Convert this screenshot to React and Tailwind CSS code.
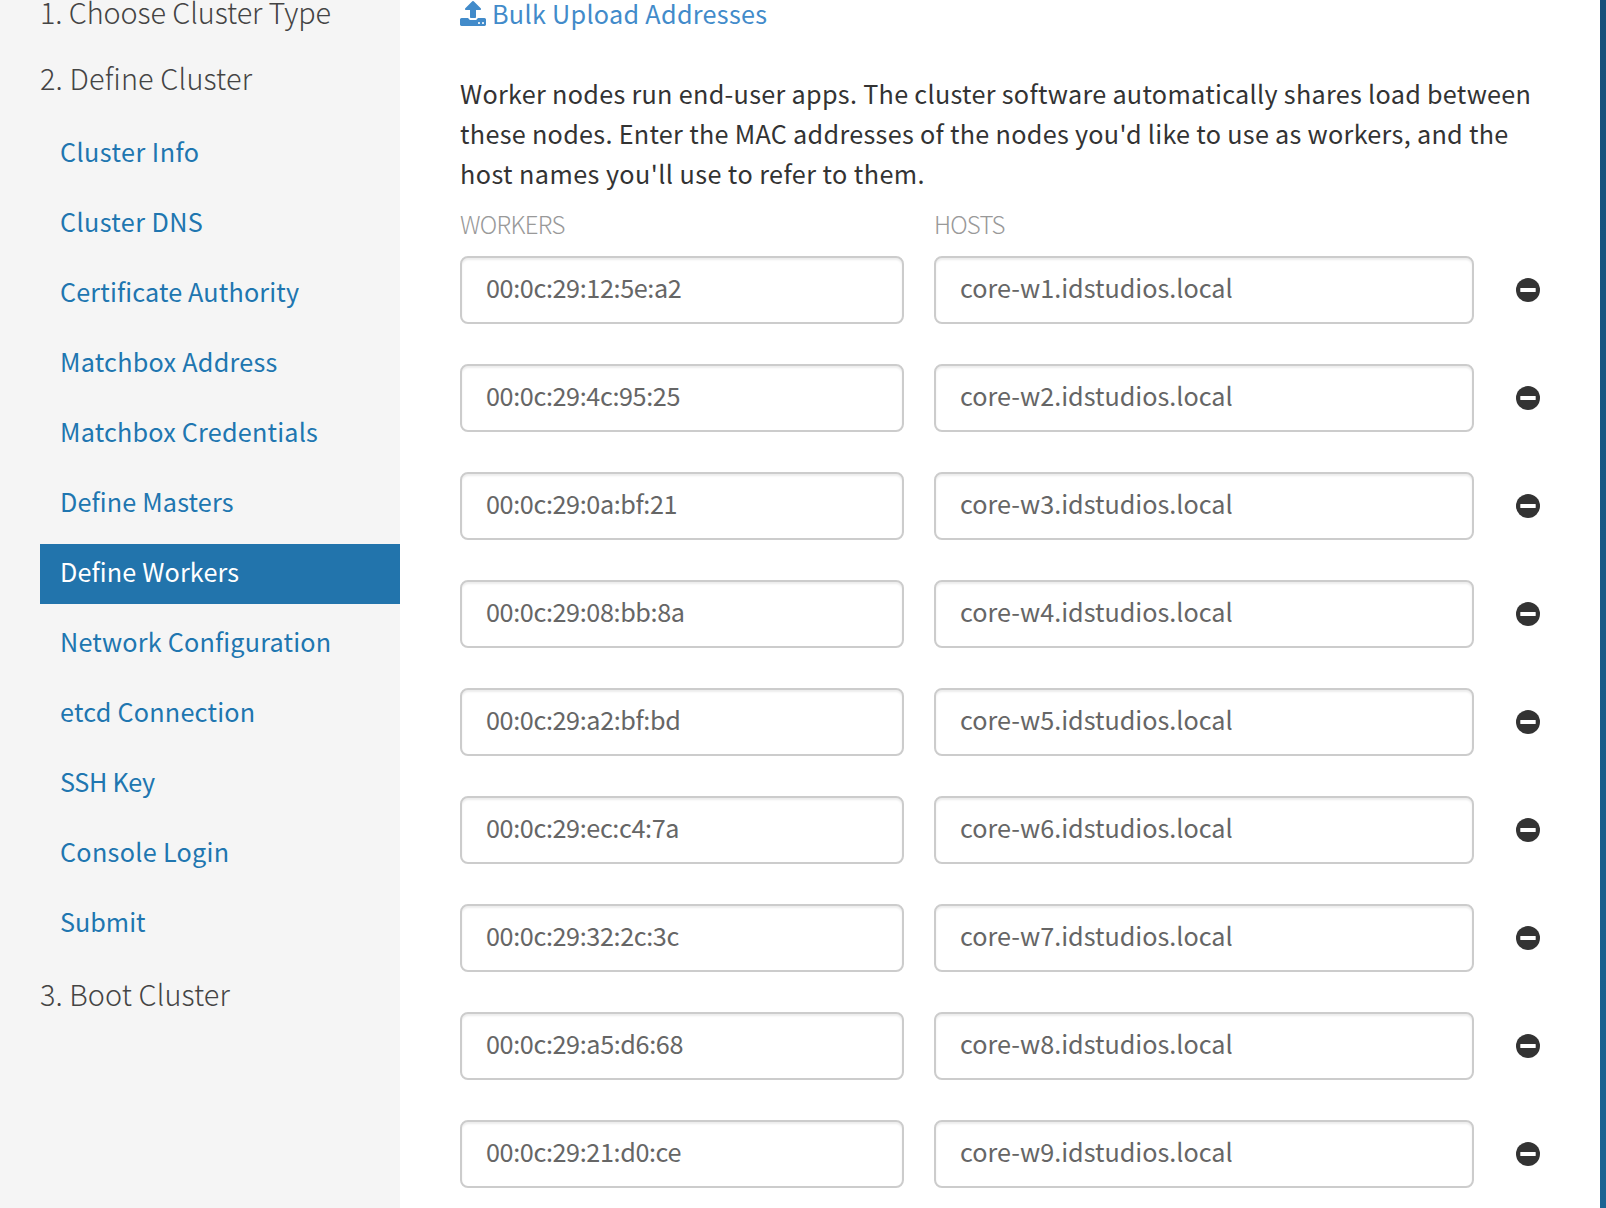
const NAV = [
  { label: "Cluster Info", tracking: "tracking-[0.45px]" },
  { label: "Cluster DNS", tracking: "tracking-[0.4px]" },
  { label: "Certificate Authority", tracking: "tracking-[0.15px]" },
  { label: "Matchbox Address", tracking: "tracking-[0.25px]" },
  { label: "Matchbox Credentials", tracking: "tracking-[0.2px]" },
  { label: "Define Masters", tracking: "tracking-[0.15px]" },
  { label: "Define Workers", tracking: "tracking-[0.15px]", active: true },
  { label: "Network Configuration", tracking: "tracking-[0.2px]" },
  { label: "etcd Connection", tracking: "tracking-[0.23px]" },
  { label: "SSH Key", tracking: "tracking-[-0.3px]" },
  { label: "Console Login", tracking: "tracking-[0.3px]" },
  { label: "Submit", tracking: "tracking-[0px]" },
];

const WORKERS = [
  ["00:0c:29:12:5e:a2", "core-w1.idstudios.local"],
  ["00:0c:29:4c:95:25", "core-w2.idstudios.local"],
  ["00:0c:29:0a:bf:21", "core-w3.idstudios.local"],
  ["00:0c:29:08:bb:8a", "core-w4.idstudios.local"],
  ["00:0c:29:a2:bf:bd", "core-w5.idstudios.local"],
  ["00:0c:29:ec:c4:7a", "core-w6.idstudios.local"],
  ["00:0c:29:32:2c:3c", "core-w7.idstudios.local"],
  ["00:0c:29:a5:d6:68", "core-w8.idstudios.local"],
  ["00:0c:29:21:d0:ce", "core-w9.idstudios.local"],
];

function UploadIcon() {
  return (
    <svg viewBox="0 0 1664 1600" className="h-[25px] w-[26px] shrink-0" fill="currentColor" aria-hidden="true">
      <path d="M1280 1408q0-26-19-45t-45-19-45 19-19 45 19 45 45 19 45-19 19-45zm256 0q0-26-19-45t-45-19-45 19-19 45 19 45 45 19 45-19 19-45zm128-224v320q0 40-28 68t-68 28h-1472q-40 0-68-28t-28-68v-320q0-40 28-68t68-28h427q21 56 70.500 92t110.500 36h256q61 0 110.500-36t70.500-92h427q40 0 68 28t28 68zm-325-648q-17 40-59 40h-256v448q0 26-19 45t-45 19h-256q-26 0-45-19t-19-45v-448h-256q-42 0-59-40-17-39 14-69l448-448q18-19 45-19t45 19l448 448q31 30 14 69z" />
    </svg>
  );
}

function RemoveIcon() {
  return (
    <svg viewBox="0 0 24 24" className="size-6" aria-hidden="true">
      <circle cx="12" cy="12" r="12" fill="#333333" />
      <rect x="4.300" y="10" width="15.400" height="4" rx="0.500" fill="#ffffff" />
    </svg>
  );
}

function StepHeading({ children, className }) {
  return (
    <h2 className={`pl-10 text-[28.8px] font-light whitespace-nowrap text-[#444] ${className}`}>{children}</h2>
  );
}

function Field({ value, label, className }) {
  return (
    <input
      type="text"
      aria-label={label}
      defaultValue={value}
      className={`h-[68px] rounded-lg border-2 border-[#ccc] bg-white px-6 pb-1.5 text-[25.2px] text-[#666] shadow-[inset_0_2px_2px_rgba(0,0,0,0.075)] outline-none ${className}`}
    />
  );
}

export default function App() {
  return (
    <div className="flex h-[1208px] w-[1606px] overflow-hidden bg-linear-to-b from-[#17507a] to-[#1b6493] font-['Noto_Sans_CJK_SC',sans-serif] text-[#333] [font-feature-settings:'liga']">
      <aside className="w-[400px] shrink-0 bg-[#f5f5f5]">
        <StepHeading className="h-8 leading-6 tracking-[-0.08px]">1. Choose Cluster Type</StepHeading>
        <StepHeading className="mt-[26px] h-10 leading-10 tracking-[0.18px]">2. Define Cluster</StepHeading>
        <nav className="mt-[26px] ml-10 flex flex-col gap-2.5">
          {NAV.map(({ label, tracking, active }) => (
            <a
              key={label}
              className={`h-[60px] pl-5 text-[25.2px] leading-[54px] whitespace-nowrap ${tracking} ${
                active ? "bg-[#2274ac] text-white" : "text-[#2076b0]"
              }`}
            >
              {label}
            </a>
          ))}
        </nav>
        <StepHeading className="mt-5 h-10 leading-10 tracking-[0.1px]">3. Boot Cluster</StepHeading>
      </aside>

      <main className="w-[1200px] shrink-0 bg-white pl-[60px]">
        <a className="flex h-[26px] items-center gap-1.5 text-[25.2px] leading-[26px] tracking-[0.3px] text-[#428bca]">
          <UploadIcon />
          Bulk Upload Addresses
        </a>

        <p className="mt-[47px] text-[25.2px] leading-10 tracking-[0.3px] whitespace-nowrap">
          Worker nodes run end-user apps. The cluster software automatically shares load between
          <br />
          these nodes. Enter the MAC addresses of the nodes you'd like to use as workers, and the
          <br />
          <span className="tracking-[0.43px]">host names you'll use to refer to them.</span>
        </p>

        <div className="mt-[13px] flex h-9 gap-[30px] text-[24px] leading-9 font-extralight text-[#999]">
          <span className="w-[444px] tracking-[-0.65px]">WORKERS</span>
          <span className="tracking-[-0.8px]">HOSTS</span>
        </div>

        <div className="mt-3.5 flex flex-col gap-10">
          {WORKERS.map(([mac, host]) => (
            <div key={mac} className="flex items-center">
              <Field value={mac} label="MAC address" className="w-[444px] tracking-[-0.38px]" />
              <Field value={host} label="Host name" className="ml-[30px] w-[540px]" />
              <button type="button" aria-label="Remove worker" className="ml-[42px]">
                <RemoveIcon />
              </button>
            </div>
          ))}
        </div>
      </main>
    </div>
  );
}
